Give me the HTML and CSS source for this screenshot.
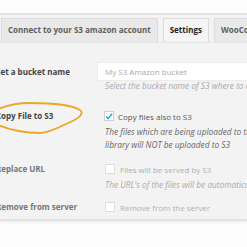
FILE: index.html
```html
<!DOCTYPE html>
<html lang="en">
<head>
  <meta charset="UTF-8">
  <title>S3 Settings</title>
  <link rel="stylesheet" href="styles.css">
</head>
<body>
  <div class="topbar"></div>

  <div class="panel">
    <div class="tabs">
      <div class="tab">Connect to your S3 amazon account</div>
      <div class="tab active">Settings</div>
      <div class="tab">WooCommerce</div>
    </div>

    <div class="form">
      <div class="row row-bucket">
        <div class="label">Set a bucket name</div>
        <div class="field">
          <div class="input">My S3 Amazon bucket</div>
          <div class="desc">Select the bucket name of S3 where to upload the files</div>
        </div>
      </div>

      <div class="row row-copy">
        <div class="label">Copy File to S3</div>
        <div class="field">
          <div class="check-line">
            <span class="box checked">
              <svg width="9" height="9" viewBox="0 0 9 9"><path d="M1.4 4.6 L3.5 6.9 L7.9 1.4" fill="none" stroke="#2e9fd0" stroke-width="1.7"/></svg>
            </span>
            <span>Copy files also to S3</span>
          </div>
          <div class="desc dark">The files which are being uploaded to the media<br>library will NOT be uploaded to S3</div>
        </div>
        <svg class="circle" width="90" height="40" viewBox="0 0 90 40">
          <path d="M-6 9 C4 4 16 1 30 1 C50 1 72 3 80 8 C85 12 78 17 66 22 C54 28 46 31 40 31 C26 31 8 28 -4 22" fill="none" stroke="#f0a526" stroke-width="1.8" stroke-linecap="round"/>
        </svg>
      </div>

      <div class="row row-off">
        <div class="label">Replace URL</div>
        <div class="field">
          <div class="check-line">
            <span class="box"></span>
            <span>Files will be served by S3</span>
          </div>
          <div class="desc">The URL's of the files will be automatically replaced</div>
        </div>
      </div>

      <div class="row row-off row-last">
        <div class="label">Remove from server</div>
        <div class="field">
          <div class="check-line">
            <span class="box"></span>
            <span>Remove from the server</span>
          </div>
        </div>
      </div>
    </div>
  </div>
</body>
</html>
```

FILE: styles.css
```css
* {
  box-sizing: border-box;
  margin: 0;
  padding: 0;
}

body {
  background: #fdfdfd;
  font-family: "Open Sans", "Noto Sans", sans-serif;
  font-size: 8px;
  color: #555;
  width: 247px;
  height: 247px;
  overflow: hidden;
}

.topbar {
  height: 15px;
  background: #fdfdfd;
  border-bottom: 2px solid #e4e4e4;
}

.panel {
  background: #f3f3f3;
  border-bottom: 2px solid #e2e2e2;
  box-shadow: 0 2px 3px rgba(0, 0, 0, 0.06);
}

.tabs {
  display: flex;
  gap: 5px;
  padding: 3px 0 0 1px;
  border-bottom: 1px solid #e6e6e6;
  white-space: nowrap;
  overflow: hidden;
}

.tab {
  height: 24px;
  line-height: 22px;
  padding: 0 6px;
  background: #e9e9e9;
  border: 1px solid #dcdcdc;
  border-bottom: none;
  font-weight: bold;
  color: #606060;
  flex-shrink: 0;
}

.tab.active {
  background: #f5f5f5;
  color: #222;
  margin-bottom: -1px;
  height: 25px;
}

.form {
  margin-left: -4px;
  overflow: hidden;
}

.row {
  display: grid;
  grid-template-columns: 101px 1fr;
  position: relative;
  white-space: nowrap;
}

.label {
  font-weight: bold;
  color: #444;
  line-height: 18px;
}

.row-bucket {
  padding-top: 19px;
  height: 64px;
}

.row-bucket .label {
  padding-top: 1px;
}

.input {
  height: 19px;
  line-height: 18px;
  background: #fff;
  border: 1px solid #ececec;
  padding-left: 7px;
  color: #aaa;
  width: 170px;
}

.desc {
  font-style: italic;
  font-size: 8.3px;
  color: #aaa;
  padding-left: 8px;
  line-height: 13px;
}

.row-bucket .desc {
  line-height: 10px;
}

.row-copy {
  height: 53px;
}

.check-line {
  display: flex;
  align-items: center;
  gap: 4px;
  height: 18px;
  padding-left: 7px;
}

.box {
  width: 10px;
  height: 10px;
  background: #fff;
  border: 1px solid #dedede;
  display: flex;
  align-items: center;
  justify-content: center;
}

.box.checked {
  border-color: #cfcfcf;
}

.desc.dark {
  color: #666;
}

.circle {
  position: absolute;
  left: 4px;
  top: -5px;
  overflow: visible;
}

.row-off {
  height: 38px;
}

.row-off .label {
  color: #777;
}

.row-off .check-line {
  color: #b0b0b0;
  padding-left: 8px;
  gap: 5px;
}

.row-last {
  height: 21px;
}
```
